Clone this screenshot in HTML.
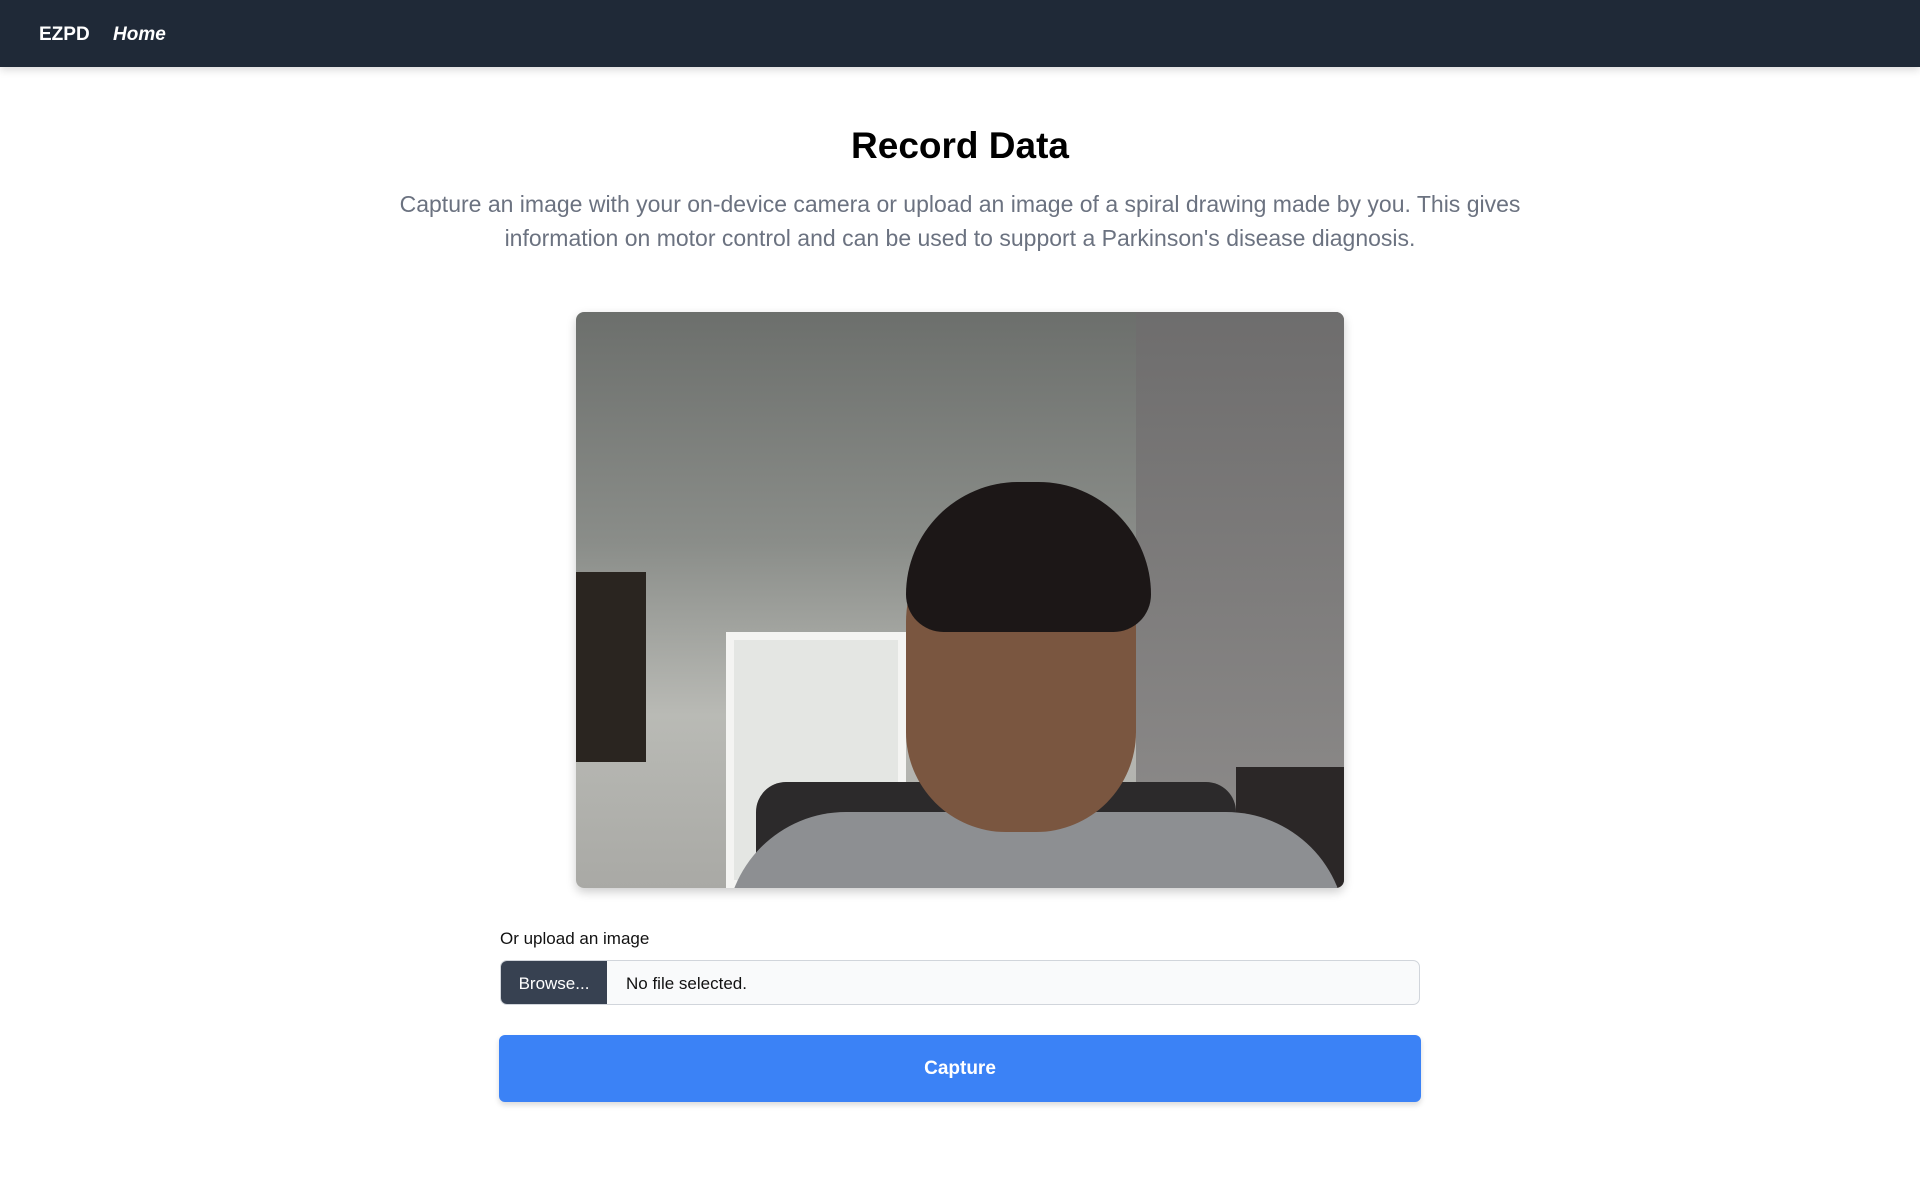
<!DOCTYPE html>
<html><head><style>
*{margin:0;padding:0;box-sizing:border-box}
body{width:1920px;height:1200px;background:#fff;font-family:"Liberation Sans",sans-serif;position:relative;overflow:hidden}
.nav{position:absolute;left:0;top:0;width:1920px;height:67px;background:#1f2937;box-shadow:0 3px 8px rgba(0,0,0,.15)}
.nav span{position:absolute;top:24px;color:#fff;font-weight:bold;font-size:19px}
h1{position:absolute;top:125px;left:0;width:1920px;text-align:center;font-size:37px;font-weight:bold;color:#000}
p.d{position:absolute;top:187px;left:360px;width:1200px;text-align:center;font-size:23px;line-height:34px;color:#6b7280}
.vid{position:absolute;left:576px;top:312px;width:768px;height:576px;border-radius:8px;overflow:hidden;box-shadow:0 4px 10px rgba(0,0,0,.2);background:linear-gradient(180deg,#6c6f6c 0%,#8a8d89 40%,#b9bab5 70%,#a9a9a5 100%)}
.lbl{position:absolute;left:500px;top:929px;font-size:17px;color:#111}
.inp{position:absolute;left:500px;top:960px;width:920px;height:45px;border:1px solid #d1d5db;border-radius:7px;background:#f9fafb;overflow:hidden}
.inp .b{position:absolute;left:0;top:0;width:106px;height:45px;background:#374151;color:#fff;font-size:17px;line-height:45px;text-align:center}
.inp .t{position:absolute;left:125px;top:1px;line-height:43px;font-size:17px;color:#111}
.cap{position:absolute;left:499px;top:1035px;width:922px;height:67px;background:#3b82f6;border-radius:6px;color:#fff;font-weight:bold;font-size:19px;text-align:center;line-height:67px;box-shadow:0 3px 6px rgba(0,0,0,.15)}
</style></head><body>
<div class="nav"><span style="left:39px">EZPD</span><span style="left:113px;font-style:italic">Home</span></div>
<h1>Record Data</h1>
<p class="d">Capture an image with your on-device camera or upload an image of a spiral drawing made by you. This gives information on motor control and can be used to support a Parkinson's disease diagnosis.</p>
<div class="vid">
<div style="position:absolute;left:560px;top:0;width:208px;height:576px;background:linear-gradient(180deg,#6e6d6d,#8f8d8c)"></div>
<div style="position:absolute;left:0;top:260px;width:70px;height:190px;background:#2a2520"></div>
<div style="position:absolute;left:150px;top:320px;width:180px;height:256px;background:#e4e6e3;border:8px solid #f4f4f2"></div>
<div style="position:absolute;left:660px;top:455px;width:108px;height:121px;background:#2b2727"></div>
<div style="position:absolute;left:180px;top:470px;width:480px;height:106px;background:#2c2a2b;border-radius:30px 30px 0 0"></div>
<div style="position:absolute;left:150px;top:500px;width:620px;height:120px;background:#8d8f92;border-radius:120px 120px 0 0"></div>
<div style="position:absolute;left:330px;top:200px;width:230px;height:320px;background:#7a5640;border-radius:110px 110px 100px 100px"></div>
<div style="position:absolute;left:330px;top:170px;width:245px;height:150px;background:#1c1717;border-radius:120px 120px 40px 40px"></div>
</div>
<div class="lbl">Or upload an image</div>
<div class="inp"><div class="b">Browse...</div><div class="t">No file selected.</div></div>
<div class="cap">Capture</div>
</body></html>
